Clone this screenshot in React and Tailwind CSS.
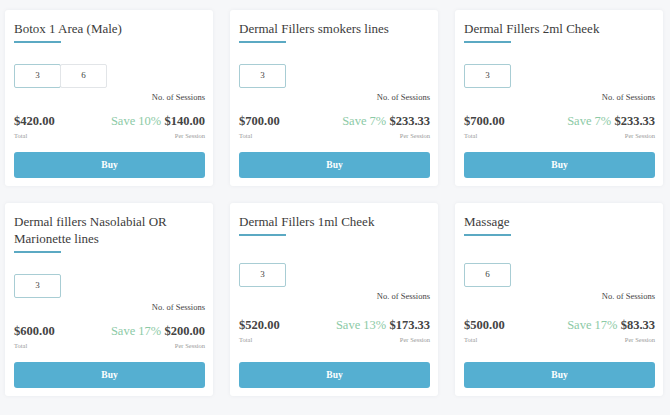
const packages = [
  { title: 'Botox 1 Area (Male)', sessions: [3, 6], total: '$420.00', save: 'Save 10%', per: '$140.00' },
  { title: 'Dermal Fillers smokers lines', sessions: [3], total: '$700.00', save: 'Save 7%', per: '$233.33' },
  { title: 'Dermal Fillers 2ml Cheek', sessions: [3], total: '$700.00', save: 'Save 7%', per: '$233.33' },
  { title: 'Dermal fillers Nasolabial OR Marionette lines', sessions: [3], total: '$600.00', save: 'Save 17%', per: '$200.00' },
  { title: 'Dermal Fillers 1ml Cheek', sessions: [3], total: '$520.00', save: 'Save 13%', per: '$173.33' },
  { title: 'Massage', sessions: [6], total: '$500.00', save: 'Save 17%', per: '$83.33' },
]

function PackageCard({ pkg }) {
  return (
    <div className="flex flex-col justify-between bg-white rounded-[3px] shadow-[0_0_4px_rgba(30,50,80,0.06)] pt-[10px] pl-[9px] pr-[8px] pb-[8px]">
      {/* Title */}
      <div className="mb-[21px]">
        <h3 className="text-[13px] leading-[17px] text-[#3b3b3b]">{pkg.title}</h3>
        <div className="w-[47px] h-[2px] bg-[#5ba9c3] mt-[4px]" />
      </div>

      {/* Sessions */}
      <div className="mb-[11px]">
        <div className="flex">
          {pkg.sessions.map((s, i) => (
            <div
              key={s}
              className={`w-[47px] h-[24px] flex items-center justify-center text-[9px] text-[#444] rounded-[2px] border ${
                i === 0 ? 'border-[#a8cdd4]' : 'border-[#e2e5e8] -ml-px'
              }`}
            >
              {s}
            </div>
          ))}
        </div>
        <p className="text-right text-[8.5px] leading-[10px] text-[#444] mt-[4px]">No. of Sessions</p>
      </div>

      {/* Prices */}
      <div className="mb-[12px]">
        <div className="flex items-center justify-between text-[12.5px] leading-[16px] text-[#444] font-bold">
          <span>{pkg.total}</span>
          <span>
            <span className="text-[#8ccaa6] font-normal">{pkg.save}</span> {pkg.per}
          </span>
        </div>
        <div className="flex justify-between text-[6.5px] leading-[8px] text-[#999] mt-[3px]">
          <span>Total</span>
          <span>Per Session</span>
        </div>
      </div>

      <button className="h-[26px] w-full rounded-[3px] bg-[#55afd1] text-white text-[9.5px] font-bold">Buy</button>
    </div>
  )
}

export default function App() {
  return (
    <div className="min-h-screen bg-[#f6f7f9] pl-[5px] pr-[7px] pt-[10px] pb-[17px]" style={{ fontFamily: '"Liberation Serif", serif' }}>
      <div className="grid grid-cols-3 gap-x-[17px] gap-y-[17px]">
        {packages.map((p) => (
          <PackageCard key={p.title} pkg={p} />
        ))}
      </div>
    </div>
  )
}
